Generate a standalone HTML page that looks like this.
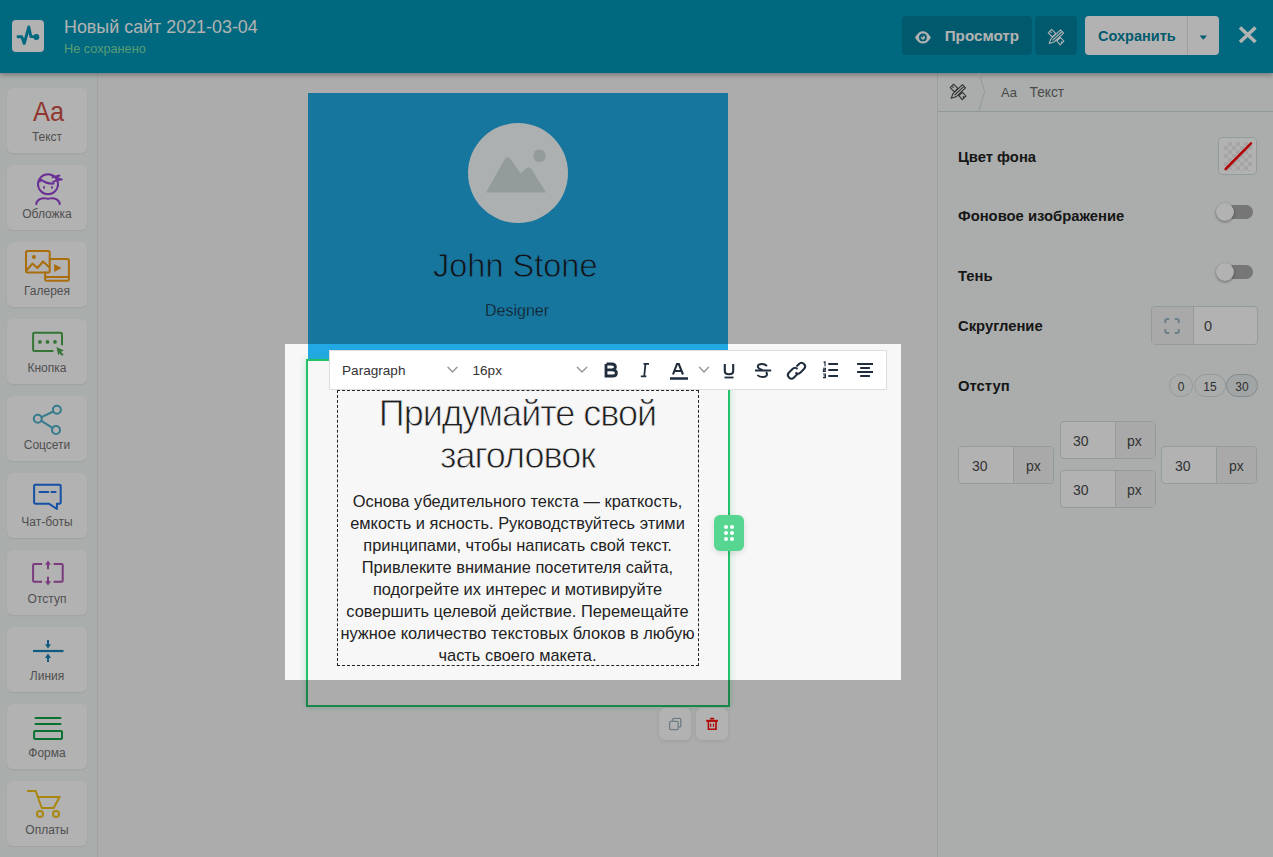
<!DOCTYPE html>
<html><head><meta charset="utf-8">
<style>
*{box-sizing:border-box;margin:0;padding:0}
html,body{width:1273px;height:857px;overflow:hidden;background:#f7f7f7;font-family:"Liberation Sans",sans-serif;position:relative}
.a{position:absolute}
.t{position:absolute;white-space:nowrap;line-height:20px}
#hdr{left:0;top:0;width:1273px;height:73px;background:#0097b6;box-shadow:0 2px 5px rgba(0,0,0,.3);z-index:5}
#side{left:0;top:73px;width:98px;height:784px;background:#f3f8f6;border-right:1px solid #e4e9e7}
.item{position:absolute;left:7px;width:80px;height:65px;background:#fff;border-radius:6px;box-shadow:0 1px 2px rgba(0,0,0,.07)}
.lbl{position:absolute;left:0;width:80px;top:39px;text-align:center;font-size:12px;color:#737373;line-height:20px}
#panel{left:937px;top:73px;width:336px;height:784px;background:#f4f8f7;border-left:1px solid #dfe5e4}
#crumb{left:938px;top:73px;width:335px;height:39px;border-bottom:1px solid #cfdcdc}
.plabel{font-size:14.8px;font-weight:bold;color:#222}
.grp{position:absolute;height:38px;border:1px solid #d3dfdf;border-radius:4px;background:#fff;overflow:hidden}
.grp .pre{position:absolute;top:0;bottom:0;background:#f3f3f3}
.grp .div{position:absolute;top:0;bottom:0;width:1px;background:#d3dfdf}
.pill{position:absolute;top:374px;height:23px;border:1px solid #d3dcdc;border-radius:12px;font-size:12px;color:#444;text-align:center;line-height:24px}
#cutout{left:285px;top:344px;width:616px;height:336px;box-shadow:0 0 0 3000px rgba(0,0,0,.3);z-index:20;pointer-events:none}
</style></head><body>
<!-- HEADER -->
<div id="hdr" class="a">
  <div class="a" style="left:12px;top:20px;width:32px;height:32px;background:#fff;border-radius:4px"></div>
  <svg class="a" style="left:12px;top:20px" width="32" height="32" viewBox="12 20 32 32"><path d="M18 36.8 H21.8 L24.2 43.5 L28.8 27 L30.9 36.6 H36" fill="none" stroke="#0097b6" stroke-width="2.9" stroke-linejoin="round" stroke-linecap="round"/><circle cx="36.3" cy="37" r="3" fill="#0097b6"/></svg>
  <div class="t" style="left:64px;top:17px;font-size:17.9px;color:#fff">Новый сайт 2021-03-04</div>
  <div class="t" style="left:64px;top:39px;font-size:12.7px;color:#80dfa9">Не сохранено</div>
  <div class="a" style="left:902px;top:16px;width:130px;height:39px;background:#00809c;border-radius:4px"></div>
  <div class="a" style="left:1035px;top:16px;width:42px;height:39px;background:#00809c;border-radius:4px"></div>
  <div class="t" style="left:944.7px;top:25.5px;font-size:15.2px;font-weight:bold;color:#fff">Просмотр</div>
  <div class="a" style="left:1085px;top:16px;width:134px;height:39px;background:#fff;border-radius:4px"></div>
  <div class="a" style="left:1187px;top:16px;width:1px;height:39px;background:#e3e3e3"></div>
  <div class="t" style="left:1098px;top:25.5px;font-size:14.5px;font-weight:bold;color:#00839d">Сохранить</div>
</div>
<!-- SIDEBAR -->
<div id="side" class="a">
  <div class="item" style="top:15px"><div class="lbl">Текст</div></div>
  <div class="item" style="top:92px"><div class="lbl">Обложка</div></div>
  <div class="item" style="top:169px"><div class="lbl">Галерея</div></div>
  <div class="item" style="top:246px"><div class="lbl">Кнопка</div></div>
  <div class="item" style="top:323px"><div class="lbl">Соцсети</div></div>
  <div class="item" style="top:400px"><div class="lbl">Чат-боты</div></div>
  <div class="item" style="top:477px"><div class="lbl">Отступ</div></div>
  <div class="item" style="top:554px"><div class="lbl">Линия</div></div>
  <div class="item" style="top:631px"><div class="lbl">Форма</div></div>
  <div class="item" style="top:708px"><div class="lbl">Оплаты</div></div>
</div>
<div class="t" style="left:32.5px;top:94.5px;font-size:28.5px;line-height:32px;color:#cf5146;transform:scaleX(.89);transform-origin:0 0">Aa</div>
<!-- CANVAS -->
<div class="a" style="left:308px;top:93px;width:420px;height:267px;background:#22a9e3"></div>
<div class="a" style="left:468px;top:123px;width:100px;height:100px;border-radius:50%;background:#f8fcfc"></div>
<svg class="a" style="left:468px;top:123px" width="100" height="100" viewBox="468 123 100 100"><path d="M486 192.6 L504.5 159.5 Q507.7 155 511 159.5 L520.7 173.4 L525.5 169 Q528.5 165.5 531.5 169 L546 192.6 Z" fill="#d5dfdf"/><circle cx="539.5" cy="155.7" r="6.3" fill="#d5dfdf"/></svg>
<div class="t" style="left:433px;top:247.2px;font-size:34px;line-height:36px;color:#1a1a1a;-webkit-text-stroke:0.8px #22a9e3;transform:scaleX(.956);transform-origin:0 0">John Stone</div>
<div class="t" style="left:485px;top:301px;font-size:16px;color:#1c1c1c;-webkit-text-stroke:0.35px #22a9e3">Designer</div>
<div class="a" style="left:306px;top:359px;width:424px;height:348px;border:2px solid #24c16a;box-shadow:0 0 7px rgba(36,193,106,.3)"></div>
<div class="a" style="left:337px;top:390px;width:362px;height:276px;border:1px dashed #222"></div>
<div class="t" style="left:300px;width:435px;top:392.7px;font-size:36px;letter-spacing:-1px;line-height:42px;text-align:center;color:#1e1e1e;-webkit-text-stroke:0.8px #f5f5f5">Придумайте свой<br>заголовок</div>
<div class="t" style="left:300px;width:435px;top:489.5px;font-size:16.4px;line-height:22px;text-align:center;color:#222">Основа убедительного текста — краткость,<br>емкость и ясность. Руководствуйтесь этими<br>принципами, чтобы написать свой текст.<br>Привлеките внимание посетителя сайта,<br>подогрейте их интерес и мотивируйте<br>совершить целевой действие. Перемещайте<br>нужное количество текстовых блоков в любую<br>часть своего макета.</div>
<div class="a" style="left:714px;top:515px;width:30px;height:36px;background:#56d690;border-radius:6px;box-shadow:0 2px 6px rgba(0,0,0,.12)"></div>
<div class="a" style="left:659px;top:708px;width:32px;height:32px;background:#fff;border-radius:6px;box-shadow:0 1px 4px rgba(0,0,0,.1)"></div>
<div class="a" style="left:696px;top:708px;width:32px;height:32px;background:#fff;border-radius:6px;box-shadow:0 1px 4px rgba(0,0,0,.1)"></div>
<!-- TOOLBAR -->
<div class="a" style="left:329px;top:350px;width:558px;height:40px;background:#fff;border:1px solid #ddd;z-index:21"></div>
<div class="t" style="left:342px;top:361px;font-size:13.6px;color:#333;z-index:22">Paragraph</div>
<div class="t" style="left:472.5px;top:361px;font-size:13.6px;color:#333;z-index:22">16px</div>
<!-- TOOLBAR ICONS -->
<svg class="a" style="left:320px;top:345px;z-index:22" width="580" height="50" viewBox="320 345 580 50">
<g fill="none" stroke="#999" stroke-width="1.5" stroke-linecap="round" stroke-linejoin="round">
<path d="M448 367.3 L452.5 372 L457 367.3"/>
<path d="M577.3 367.3 L582 372 L586.8 367.3"/>
<path d="M699.5 367.3 L704 372 L708.5 367.3"/>
</g>
<g fill="none" stroke="#1f2d3d" stroke-width="2" stroke-linecap="butt" stroke-linejoin="miter">
<path d="M606.5 364 H611.7 Q615.4 364 615.4 367.1 Q615.4 369.8 611.7 369.8 H606.5 M606.5 369.8 H612.3 Q616.4 369.8 616.4 372.9 Q616.4 376 612.3 376 H606 V364" stroke-width="2.8"/>
<path d="M645.5 363.5 L644.2 376.5 M643.5 363.9 H649 M640.8 376.3 H646.3" stroke-width="1.8"/>
<path d="M673 374.5 L677 364 L678.8 364 L683 374.5 M674.5 371 H681.5" stroke-width="2.1"/>
<path d="M670 378.5 H688" stroke-width="2.5"/>
<path d="M724.8 364 V371 Q724.8 374.3 729 374.3 Q733.2 374.3 733.2 371 V364" stroke-width="2.1"/>
<path d="M724.5 377.5 H733.5" stroke-width="1.8"/>
<path d="M755 370.5 H771.2" stroke-width="2"/>
<path d="M767 366 Q765 364 762 364 Q757.8 364 757.8 366.5 Q757.8 368.5 762.5 370 M766 372 Q767 373 767 374 Q767 377 762.5 377 Q759 377 757.5 375" stroke-width="2"/>
<path d="M796.5 366.5 L799 364 Q801.5 361.5 804 364 Q806.5 366.5 804 369 L800.5 372.5 Q798 375 795.5 372.5 M797.5 374 L794 377.5 Q791.5 380 789 377.5 Q786.5 375 789 372.5 L792.5 369 Q795 366.5 797.5 369" stroke-width="2"/>
<path d="M828.3 364 H838 M828.3 370 H838 M828.3 376 H838" stroke-width="2"/>
<path d="M857.1 364 H873 M860.2 368 H869.9 M857.1 372 H873 M860.2 376 H869.9" stroke-width="2"/>
</g>
<path d="M823.6 362.4 L825 361.9 V366.2 M823 368.2 H825.4 V369.8 H823.4 V371.4 H825.8 M823 374 H825.4 V377.6 H823 M823.6 375.8 H825.4" fill="none" stroke="#1f2d3d" stroke-width="1.15"/>
</svg>
<!-- PANEL -->
<div id="panel" class="a"></div>
<div id="crumb" class="a"></div>
<div class="t" style="left:1001px;top:82.5px;font-size:13px;color:#6a6a6a">Aa</div>
<div class="t" style="left:1029.5px;top:82.5px;font-size:13.75px;color:#6a6a6a">Текст</div>
<div class="t plabel" style="left:958px;top:147px">Цвет фона</div>
<div class="t plabel" style="left:958px;top:206px">Фоновое изображение</div>
<div class="t plabel" style="left:958px;top:266px">Тень</div>
<div class="t plabel" style="left:958px;top:316px">Скругление</div>
<div class="t plabel" style="left:958px;top:376px">Отступ</div>
<div class="a" style="left:1218px;top:137px;width:39px;height:38px;border:1px solid #d3dfdf;border-radius:4px;background:#fff"></div>
<div class="a" style="left:1224px;top:142px;width:28px;height:29px;border-radius:3px;background-color:#fff;background-image:linear-gradient(45deg,#ececec 25%,transparent 25%,transparent 75%,#ececec 75%),linear-gradient(45deg,#ececec 25%,transparent 25%,transparent 75%,#ececec 75%);background-size:8px 8px;background-position:0 0,4px 4px"></div>
<svg class="a" style="left:1218px;top:137px" width="39" height="38"><line x1="7.7" y1="32" x2="33" y2="6.4" stroke="#ff0a0a" stroke-width="2.6" stroke-linecap="round"/></svg>
<div class="a" style="left:1226px;top:205px;width:27px;height:14px;border-radius:7px;background:#aaa"></div>
<div class="a" style="left:1216px;top:203px;width:18px;height:18px;border-radius:50%;background:#fff;box-shadow:0 1px 3px rgba(0,0,0,.4)"></div>
<div class="a" style="left:1226px;top:265px;width:27px;height:14px;border-radius:7px;background:#aaa"></div>
<div class="a" style="left:1216px;top:263px;width:18px;height:18px;border-radius:50%;background:#fff;box-shadow:0 1px 3px rgba(0,0,0,.4)"></div>
<div class="grp" style="left:1151px;top:306px;width:107px;height:39px"><div class="pre" style="left:0;width:41px"></div><div class="div" style="left:41px"></div></div>
<div class="t" style="left:1204px;top:316px;font-size:14.5px;color:#4a4a4a">0</div>
<div class="pill" style="left:1169px;width:24px">0</div>
<div class="pill" style="left:1194px;width:32px">15</div>
<div class="pill" style="left:1226px;width:32px;background:#e9eded;border-color:#b9c6c6">30</div>
<div class="grp" style="left:958px;top:446px;width:96px"><div class="pre" style="left:54px;right:0"></div><div class="div" style="left:54px"></div></div>
<div class="grp" style="left:1060px;top:421px;width:96px"><div class="pre" style="left:54px;right:0"></div><div class="div" style="left:54px"></div></div>
<div class="grp" style="left:1060px;top:470px;width:96px"><div class="pre" style="left:54px;right:0"></div><div class="div" style="left:54px"></div></div>
<div class="grp" style="left:1161px;top:446px;width:96px"><div class="pre" style="left:54px;right:0"></div><div class="div" style="left:54px"></div></div>
<div class="t" style="left:972px;top:456px;font-size:14px;color:#4a4a4a">30</div>
<div class="t" style="left:1026px;top:456px;font-size:14px;color:#4a4a4a">px</div>
<div class="t" style="left:1073px;top:431px;font-size:14px;color:#4a4a4a">30</div>
<div class="t" style="left:1127px;top:431px;font-size:14px;color:#4a4a4a">px</div>
<div class="t" style="left:1073px;top:480px;font-size:14px;color:#4a4a4a">30</div>
<div class="t" style="left:1127px;top:480px;font-size:14px;color:#4a4a4a">px</div>
<div class="t" style="left:1175px;top:456px;font-size:14px;color:#4a4a4a">30</div>
<div class="t" style="left:1229px;top:456px;font-size:14px;color:#4a4a4a">px</div>
<!-- header/toolbar icons -->
<svg class="a" style="left:0;top:0;z-index:6" width="1273" height="112">
<path d="M915 37.4 C917.5 33 920 31.2 922.9 31.2 C925.8 31.2 928.3 33 930.9 37.4 C928.3 41.8 925.8 43.6 922.9 43.6 C920 43.6 917.5 41.8 915 37.4 Z" fill="#fff"/>
<circle cx="922.9" cy="37.4" r="3.9" fill="#00809c"/>
<circle cx="922.9" cy="37.6" r="2.1" fill="#fff"/>
<circle cx="922.3" cy="36.6" r="1" fill="#00809c"/>
<g fill="none" stroke="#fff" stroke-width="1.1" stroke-linejoin="round" transform="translate(98,-54.8)"><path d="M950.2 87.6 L953.6 84.2 L957.8 88.4 L954.4 91.8 Z M958.9 95.7 L962.5 92.3 L965.9 96 L962.2 99.6 Z M952.4 86.5 L953.6 87.7 M962.8 96.3 L964 97.5 M962.5 84.7 L965.5 87.9 L956 96.8 L951.2 98.3 L953 93.6 Z M964 86.3 L954.5 95.2"/></g>
<path d="M1199.6 35.6 H1207 L1203.3 39.8 Z" fill="#00839d"/>
<path d="M1240 27.5 L1255.5 42 M1255.5 27.5 L1240 42" stroke="#fff" stroke-width="3.6" stroke-linecap="butt"/>
<g fill="none" stroke="#444" stroke-width="1.1" stroke-linejoin="round"><path d="M950.2 87.6 L953.6 84.2 L957.8 88.4 L954.4 91.8 Z M958.9 95.7 L962.5 92.3 L965.9 96 L962.2 99.6 Z M952.4 86.5 L953.6 87.7 M962.8 96.3 L964 97.5 M962.5 84.7 L965.5 87.9 L956 96.8 L951.2 98.3 L953 93.6 Z M964 86.3 L954.5 95.2"/></g>
<path d="M978.8 73 L984.7 91.5 L978.8 111" fill="none" stroke="#cfdcdc" stroke-width="1"/>
</svg>
<!-- MISC ICONS -->
<svg class="a" style="left:640px;top:500px;z-index:6" width="120" height="250" viewBox="640 500 120 250">
<g fill="#fff"><circle cx="726" cy="527.1" r="2"/><circle cx="732" cy="527.1" r="2"/><circle cx="726" cy="533" r="2"/><circle cx="732" cy="533" r="2"/><circle cx="726" cy="539" r="2"/><circle cx="732" cy="539" r="2"/></g>
<g fill="none" stroke="#9db3bb" stroke-width="1.25">
<path d="M672.6 720.8 V719.5 Q672.6 718.3 673.8 718.3 H679.6 Q680.8 718.3 680.8 719.5 V726 Q680.8 727.2 679.6 727.2 H678.4"/>
<rect x="669.6" y="721.3" width="8.6" height="8.3" rx="1.3"/>
</g>
<g fill="#ff0a0a">
<rect x="710.1" y="717.8" width="4" height="1.7" rx=".5"/>
<rect x="706.2" y="719.8" width="11.7" height="2.1"/>
<rect x="710.1" y="723.6" width="1.2" height="3.3"/>
<rect x="712.9" y="723.6" width="1.2" height="3.3"/>
</g>
<path d="M708.4 721.5 V729.2 H716 V721.5" fill="none" stroke="#ff0a0a" stroke-width="1.6"/>
</svg>
<svg class="a" style="left:1160px;top:314px" width="24" height="24" viewBox="1160 314 24 24">
<g fill="none" stroke="#9bb6c0" stroke-width="2" stroke-linecap="butt">
<path d="M1165.3 323 V321 Q1165.3 319 1167.3 319 H1169.3 M1174.8 319 H1176.8 Q1178.8 319 1178.8 321 V323 M1178.8 329 V331 Q1178.8 333 1176.8 333 H1174.8 M1169.3 333 H1167.3 Q1165.3 333 1165.3 331 V329"/>
</g>
</svg>
<!-- ICON LAYER -->
<svg class="a" style="left:0;top:0;z-index:6" width="1273" height="857">
<g fill="none" stroke-width="2" stroke-linecap="round" stroke-linejoin="round">
<!-- cover person -->
<g stroke="#9846d6">
<circle cx="48" cy="184.2" r="10"/>
<path d="M39.8 181.5 L41 179.6 Q46.5 184 53.6 183.6 L53.2 181.6 L61.8 179.4 L56.6 178.4 L59.4 175.4 L52.5 177.2"/>
<path d="M36.2 204 C37 199.5 42 197.6 45.5 198.4 Q48 199.2 50.5 198.4 C54 197.6 59 199.5 59.8 204"/>
</g>
<rect x="43.2" y="186.2" width="1.8" height="2.4" fill="#9846d6" stroke="none"/>
<rect x="51" y="186.2" width="1.8" height="2.4" fill="#9846d6" stroke="none"/>
<!-- gallery -->
<g stroke="#f39c12">
<rect x="26" y="251" width="23.7" height="21.6" rx="1.5"/>
<path d="M49.7 258.9 H67.5 Q68.9 258.9 68.9 260.3 V279.4 Q68.9 280.8 67.5 280.8 H46.6 Q45.2 280.8 45.2 279.4 V272.6"/>
<path d="M45.2 277 H68.9"/>
<path d="M26.8 270 L32.4 263.6 L37.5 268 L43 261.5 L49 267"/>
</g>
<circle cx="33.9" cy="257" r="2" fill="#f39c12"/>
<path d="M54.2 264 L61.5 268 L54.2 272 Z" fill="#f39c12"/>
<!-- button -->
<g stroke="#4ca84c">
<path d="M52.7 350.9 H34.3 Q33.1 350.9 33.1 349.7 V334 Q33.1 332.8 34.3 332.8 H60.8 Q62 332.8 62 334 V344.5"/>
</g>
<g fill="#4ca84c"><circle cx="39.9" cy="341.9" r="1.9"/><circle cx="47.5" cy="341.9" r="1.9"/><circle cx="55" cy="341.9" r="1.9"/>
<path d="M56.4 347 L64 350.5 L61 351.8 L63.5 354.6 L62 356 L59.5 353.2 L58.3 355.5 Z"/></g>
<!-- share -->
<g stroke="#4db0c9">
<circle cx="37.8" cy="418.8" r="4"/><circle cx="56.9" cy="409.8" r="4"/><circle cx="56" cy="430" r="4"/>
<path d="M41.4 417.1 L53.3 411.5 M41.3 420.9 L52.5 427.9"/>
</g>
<!-- chat -->
<g stroke="#1e73ec">
<path d="M48.8 503.7 H35.2 Q34.1 503.7 34.1 502.6 V485.9 Q34.1 484.8 35.2 484.8 H59.6 Q60.7 484.8 60.7 485.9 V502.6 Q60.7 503.7 59.6 503.7 H56.9 V509 Z"/>
<path d="M39.5 491.9 H48.3 M51.5 491.9 H55.6"/>
</g>
<!-- padding -->
<g stroke="#ae53b5">
<path d="M41.3 564 H34.3 Q33.1 564 33.1 565.2 V580.5 Q33.1 581.7 34.3 581.7 H41.3"/>
<path d="M54.4 564 H61.5 Q62.7 564 62.7 565.2 V580.5 Q62.7 581.7 61.5 581.7 H54.4"/>
<path d="M48 563 V568.4 M48 577.5 V582"/>
</g>
<g fill="#ae53b5"><path d="M45 564.8 L48 560.4 L51 564.8 Z M45 581.2 L48 585.4 L51 581.2 Z"/></g>
<!-- line -->
<g stroke="#1a80b6" stroke-linecap="butt">
<path d="M33 651 H63.5" stroke-width="2.2"/>
<path d="M48 640 V645 M48 657 V662"/>
</g>
<g fill="#1a80b6"><path d="M45 644.2 L48 648.6 L51 644.2 Z M45 657.9 L48 653.5 L51 657.9 Z"/></g>
<!-- form -->
<g stroke="#10a348">
<path d="M35.5 717.9 H60.5 M35.5 723.9 H60.5"/>
<rect x="34.1" y="731" width="27.9" height="7.9" rx="1"/>
</g>
<!-- cart -->
<g stroke="#f2c215" stroke-linecap="butt">
<path d="M27.1 790.9 H35.6 L41.8 808 H53.6 L59.6 797 H38.1"/>
<circle cx="40" cy="814" r="3"/><circle cx="56" cy="814" r="3"/>
</g>
</g>
</svg>
<div id="cutout" class="a"></div>
</body></html>
